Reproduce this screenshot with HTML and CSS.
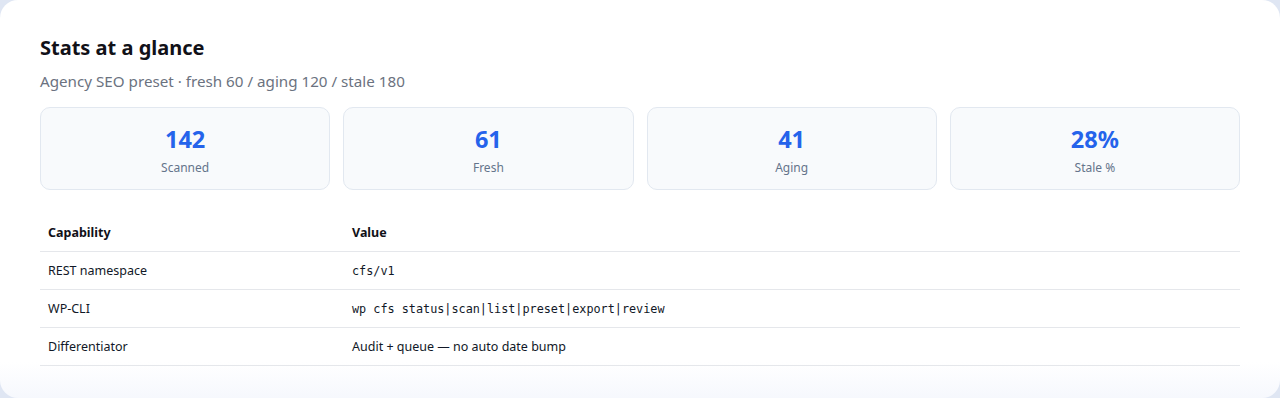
FILE: index.html
```html
<!DOCTYPE html>
<html lang="en">
<head>
  <meta charset="UTF-8">
  <meta name="viewport" content="width=device-width, initial-scale=1.0">
  <title>Stats at a glance</title>
  <link rel="stylesheet" href="styles.css">
</head>
<body>
  <section class="panel">
    <h2 class="panel-title">Stats at a glance</h2>
    <p class="panel-sub">Agency SEO preset · fresh 60 / aging 120 / stale 180</p>

    <div class="stats">
      <div class="stat">
        <div class="stat-num">142</div>
        <div class="stat-label">Scanned</div>
      </div>
      <div class="stat">
        <div class="stat-num">61</div>
        <div class="stat-label">Fresh</div>
      </div>
      <div class="stat">
        <div class="stat-num">41</div>
        <div class="stat-label">Aging</div>
      </div>
      <div class="stat">
        <div class="stat-num">28%</div>
        <div class="stat-label">Stale %</div>
      </div>
    </div>

    <table class="caps">
      <thead>
        <tr>
          <th class="col-cap">Capability</th>
          <th>Value</th>
        </tr>
      </thead>
      <tbody>
        <tr>
          <td>REST namespace</td>
          <td><code>cfs/v1</code></td>
        </tr>
        <tr>
          <td>WP-CLI</td>
          <td><code>wp cfs status|scan|list|preset|export|review</code></td>
        </tr>
        <tr>
          <td>Differentiator</td>
          <td>Audit + queue — no auto date bump</td>
        </tr>
      </tbody>
    </table>
  </section>
</body>
</html>
```

FILE: styles.css
```css
/* Page */
body {
  margin: 0;
  padding: 0;
  background: #dfe6f3;
  font-family: 'Noto Sans', 'Open Sans', sans-serif;
  color: #111827;
  height: 100vh;
  overflow: hidden;
}

.panel {
  box-sizing: border-box;
  height: 100vh;
  padding: 34px 40px 0;
  background: linear-gradient(to bottom, #ffffff 91%, #f6f8fd);
  border-radius: 18px;
}

.panel-title {
  margin: 0;
  font-size: 20px;
  font-weight: 700;
  line-height: 28px;
  color: #111118;
}

.panel-sub {
  margin: 8px 0 0;
  font-size: 15.2px;
  line-height: 22px;
  color: #6b7280;
}

/* Stat cards */
.stats {
  display: grid;
  grid-template-columns: repeat(4, 1fr);
  gap: 13px;
  margin-top: 15px;
}

.stat {
  height: 83px;
  box-sizing: border-box;
  padding-top: 3px;
  background: #f8fafc;
  border: 1px solid #e2e8f0;
  border-radius: 10px;
  display: flex;
  flex-direction: column;
  align-items: center;
  justify-content: center;
}

.stat-num {
  font-size: 23.5px;
  font-weight: 700;
  line-height: 30px;
  color: #2563eb;
}

.stat-label {
  margin-top: 5px;
  font-size: 12px;
  line-height: 18px;
  color: #64748b;
}

/* Capability table */
.caps {
  width: 100%;
  margin-top: 24px;
  border-collapse: collapse;
  font-size: 12.5px;
}

.caps th,
.caps td {
  text-align: left;
  padding: 0 8px;
  height: 37px;
  border-bottom: 1px solid #e5e7eb;
}

.caps th {
  font-weight: 700;
  color: #111118;
}

.caps .col-cap {
  width: 288px;
}

.caps code {
  font-family: 'DejaVu Sans Mono', 'Liberation Mono', monospace;
  font-size: 11.8px;
}
```
